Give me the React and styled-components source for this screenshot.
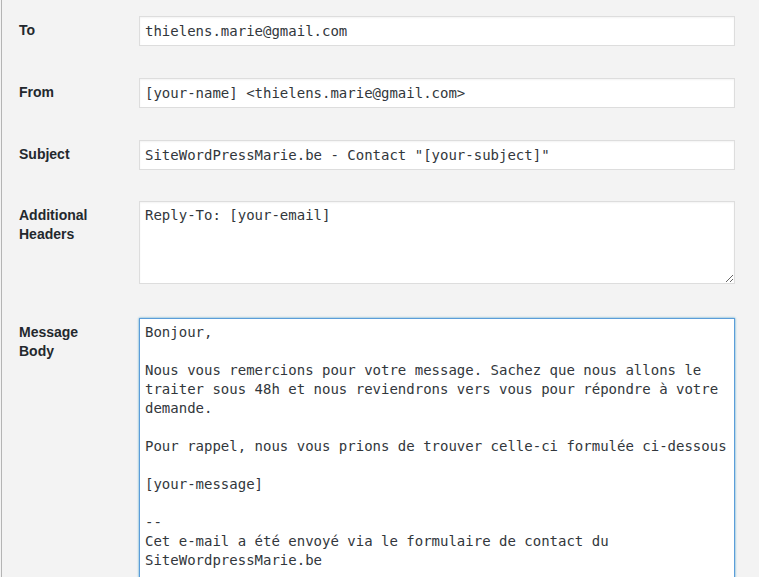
import styled, { createGlobalStyle } from "styled-components";

const GlobalStyle = createGlobalStyle`
  html, body {
    margin: 0;
    background: #f3f3f3;
    overflow: hidden;
  }
`;

const messageBody = `Bonjour,

Nous vous remercions pour votre message. Sachez que nous allons le
traiter sous 48h et nous reviendrons vers vous pour répondre à votre
demande.

Pour rappel, nous vous prions de trouver celle-ci formulée ci-dessous

[your-message]

--
Cet e-mail a été envoyé via le formulaire de contact du
SiteWordpressMarie.be`;

const fields = [
  { label: "To", value: "thielens.marie@gmail.com" },
  { label: "From", value: "[your-name] <thielens.marie@gmail.com>" },
  { label: "Subject", value: 'SiteWordPressMarie.be - Contact "[your-subject]"' },
];

const App = () => {
  return (
    <>
      <GlobalStyle />
      <Panel>
        {fields.map((f) => (
          <Row key={f.label}>
            <Label>{f.label}</Label>
            <TextInput type="text" readOnly defaultValue={f.value} />
          </Row>
        ))}
        <Row $gap={31}>
          <Label>
            Additional
            <br />
            Headers
          </Label>
          <TextArea readOnly defaultValue="Reply-To: [your-email]" $height={83} />
        </Row>
        <Row $gap={34}>
          <Label>
            Message
            <br />
            Body
          </Label>
          <TextArea readOnly defaultValue={messageBody} $height={320} $focused />
        </Row>
      </Panel>
    </>
  );
};

const Panel = styled.div`
  margin-left: 1px;
  border-left: 1px solid #b4b4b4;
  padding: 16px 0 0 17px;
  min-height: 600px;
  font-family: "Liberation Sans", Arial, sans-serif;
`;

const Row = styled.div`
  display: grid;
  grid-template-columns: 120px 596px;
  align-items: start;
  margin-top: ${(p) => p.$gap ?? 32}px;

  &:first-child {
    margin-top: 0;
  }
`;

const Label = styled.div`
  padding-top: 5px;
  font-size: 14px;
  line-height: 19px;
  font-weight: bold;
  color: #23282d;
`;

const fieldBase = `
  box-sizing: border-box;
  width: 596px;
  margin: 0;
  border: 1px solid #dddddd;
  background: #ffffff;
  color: #32373c;
  font-family: "DejaVu Sans Mono", "Liberation Mono", monospace;
  font-size: 14px;
  line-height: 19px;
  outline: none;
  box-shadow: inset 0 1px 2px rgba(0, 0, 0, 0.05);
`;

const TextInput = styled.input`
  ${fieldBase}
  height: 30px;
  padding: 0 5px;
`;

const TextArea = styled.textarea`
  ${fieldBase}
  display: block;
  height: ${(p) => p.$height}px;
  padding: 4px 5px;
  overflow: hidden;
  white-space: pre;
  resize: ${(p) => (p.$focused ? "none" : "vertical")};
  border-color: ${(p) => (p.$focused ? "#5b9dd9" : "#dddddd")};
  box-shadow: ${(p) =>
    p.$focused ? "0 0 2px rgba(30, 140, 190, 0.8)" : "inset 0 1px 2px rgba(0, 0, 0, 0.05)"};
`;

export default App;
